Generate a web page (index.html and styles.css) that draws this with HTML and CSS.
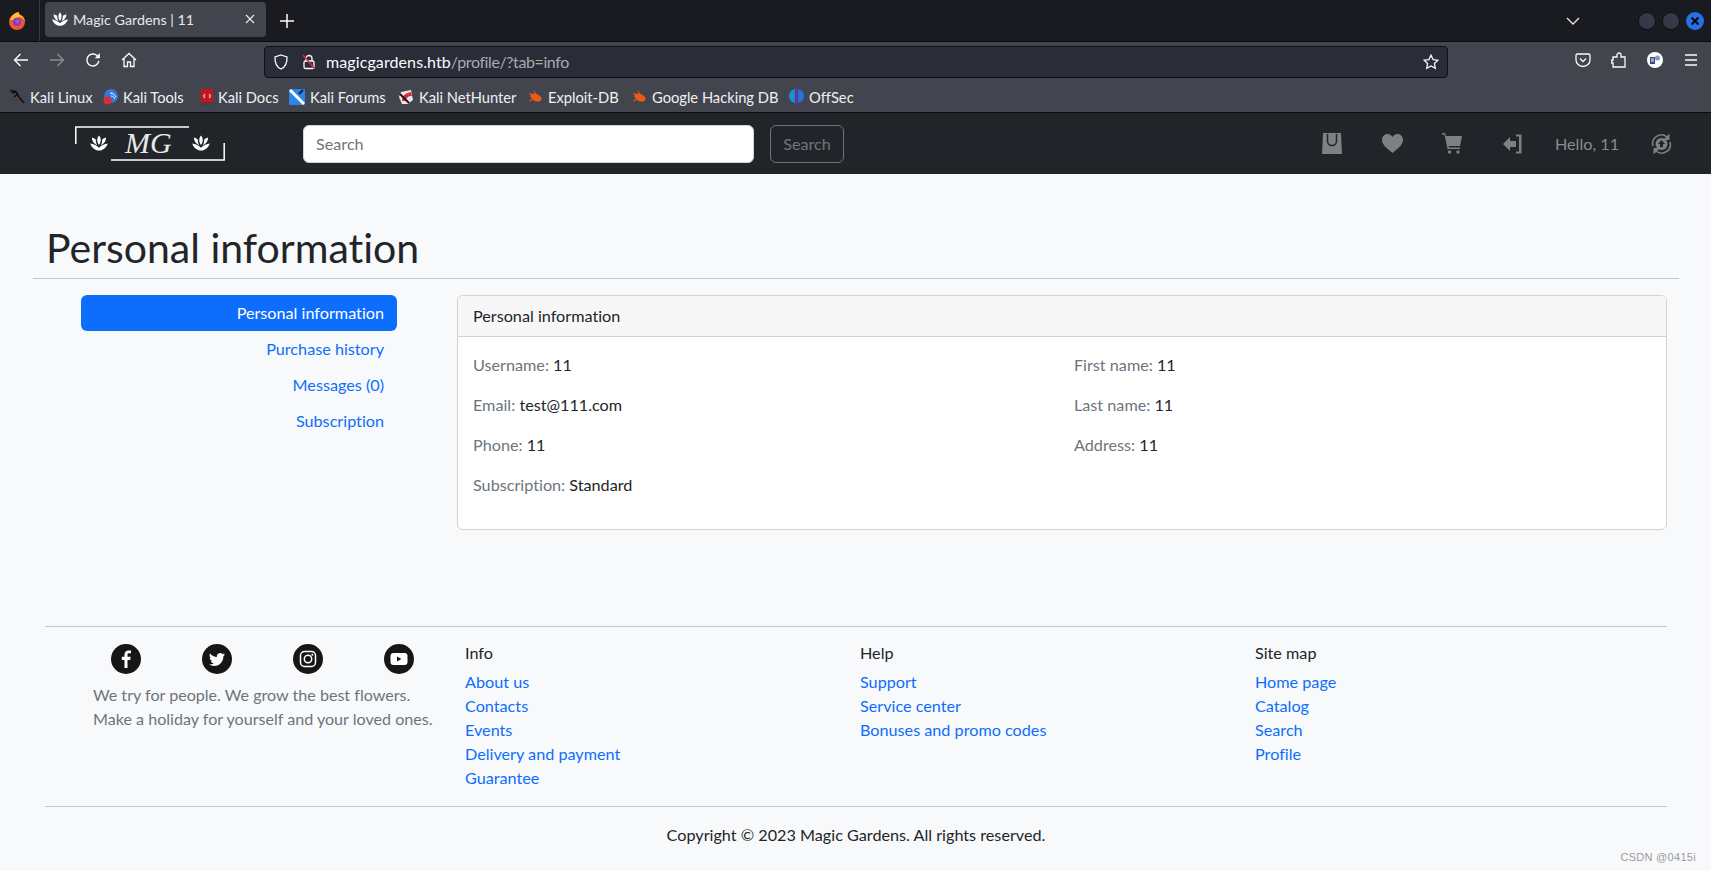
FILE: index.html
```html
<!DOCTYPE html>
<html lang="en">
<head>
<meta charset="utf-8">
<title>Magic Gardens | 11</title>
<link rel="stylesheet" href="styles.css">
</head>
<body>
<svg class="defs" width="0" height="0" aria-hidden="true">
  <symbol id="lotus" viewBox="0 0 24 24">
    <path fill="currentColor" d="M12 3C9.4 6 9 10.5 12 14.5 15 10.500 14.600 6 12 3zM3.500 5.500C3.500 9.500 5.500 13 9.800 14.600 8.500 12 8 9.500 8.200 7.700 6.800 6.600 5.200 5.900 3.500 5.500zM20.500 5.500C18.800 5.900 17.200 6.600 15.800 7.700 16 9.500 15.500 12 14.200 14.600 18.500 13 20.500 9.500 20.500 5.500zM1.500 12.500C3 17 7 21 12 21s9-4 10.500-8.500c-3.500.3-7.500 2-10.500 5.200-3-3.200-7-4.900-10.500-5.200z"/>
  </symbol>
</svg>

<header class="chrome">
  <div class="tabbar">
    <svg class="ff" width="20" height="20" viewBox="0 0 20 20"><circle cx="10" cy="11" r="8" fill="#f1562b"/><path d="M3 9C4 4 9 1 12 1c-.500 2 1 3 3 4 2 2 3 4 3 6-1-3-3-5-5-5-3 0-6 1-7 3z" fill="#ffbd3a"/><circle cx="10" cy="11" r="4" fill="#7b3fc4"/><circle cx="10.500" cy="10.500" r="2" fill="#c04bb0"/></svg>
    <span class="tabsep"></span>
    <div class="tab">
      <svg class="tabicon" width="18" height="18"><use href="#lotus"/></svg>
      <span class="tabtitle">Magic Gardens | 11</span>
      <svg class="tabclose" width="10" height="10" viewBox="0 0 10 10"><path d="M1 1l8 8M9 1l-8 8" stroke="#e8e8ea" stroke-width="1.200"/></svg>
    </div>
    <svg class="newtab" width="14" height="14" viewBox="0 0 14 14"><path d="M7 0v14M0 7h14" stroke="#fbfbfe" stroke-width="1.500"/></svg>
    <svg class="chev" width="14" height="8" viewBox="0 0 14 8"><path d="M1 1l6 6 6-6" fill="none" stroke="#e8e8ea" stroke-width="1.300"/></svg>
    <span class="winbtn"></span>
    <span class="winbtn"></span>
    <span class="winbtn close"><svg width="10" height="10" viewBox="0 0 10 10"><path d="M1.500 1.500l7 7M8.500 1.500l-7 7" stroke="#0b0b12" stroke-width="2.200"/></svg></span>
  </div>
  <div class="toolbar">
    <span class="tool"><svg width="16" height="16" viewBox="0 0 16 16"><path d="M15 8H1.500M7.500 2l-6 6 6 6" fill="none" stroke="#fbfbfe" stroke-width="1.400"/></svg></span>
    <span class="tool dim"><svg width="16" height="16" viewBox="0 0 16 16"><path d="M1 8h13.500M8.500 2l6 6-6 6" fill="none" stroke="#8a8c93" stroke-width="1.400"/></svg></span>
    <span class="tool"><svg width="16" height="16" viewBox="0 0 16 16"><path d="M13.800 8.800A6 6 0 1 1 12 3.600L14.300 5.500" fill="none" stroke="#fbfbfe" stroke-width="1.400"/><path d="M14.800 1v5.200H9.700z" fill="#fbfbfe"/></svg></span>
    <span class="tool"><svg width="16" height="16" viewBox="0 0 16 16"><path d="M1 8l7-6.500L15 8M3 6.500V14.500h3.500V10h3v4.500H13V6.500" fill="none" stroke="#fbfbfe" stroke-width="1.300"/></svg></span>
    <div class="urlbar">
      <svg class="shield" width="16" height="16" viewBox="0 0 16 16"><path d="M8 1l6 2c.3 6-1.500 10-6 12C3.500 13 1.700 9 2 3z" fill="none" stroke="#fbfbfe" stroke-width="1.300"/></svg>
      <svg class="lock" width="16" height="16" viewBox="0 0 16 16"><rect x="3" y="7" width="10" height="7.500" rx="1.500" fill="none" stroke="#fbfbfe" stroke-width="1.300"/><path d="M5 7V4.500a3 3 0 0 1 6 0V7" fill="none" stroke="#fbfbfe" stroke-width="1.300"/><path d="M2 1l12 14" stroke="#e22850" stroke-width="1.500"/></svg>
      <span class="url"><span class="host">magicgardens.htb</span>/profile/?tab=info</span>
      <svg class="star" width="16" height="16" viewBox="0 0 16 16"><path d="M8 1.200l2.100 4.400 4.800.6-3.500 3.300.9 4.800L8 12l-4.300 2.300.9-4.800L1.100 6.200l4.800-.6z" fill="none" stroke="#fbfbfe" stroke-width="1.300"/></svg>
    </div>
    <span class="tool pocket"><svg width="16" height="16" viewBox="0 0 16 16"><path d="M2.500 2h11A1.500 1.500 0 0 1 15 3.500V8a7 6.500 0 0 1-14 0V3.500A1.500 1.500 0 0 1 2.500 2z" fill="none" stroke="#fbfbfe" stroke-width="1.300"/><path d="M5 6.500l3 3 3-3" fill="none" stroke="#fbfbfe" stroke-width="1.300"/></svg></span>
    <span class="tool"><svg width="16" height="16" viewBox="0 0 16 16"><path d="M6 15H2v-4H.8V8H2V5h4V3a2 2 0 0 1 4 0v2h4v10z" fill="none" stroke="#fbfbfe" stroke-width="1.300"/></svg></span>
    <span class="tool"><svg width="16" height="16" viewBox="0 0 16 16"><circle cx="8" cy="8" r="8" fill="#fff"/><path d="M3 5h5v7H3z" fill="#34488f"/><circle cx="10.500" cy="6" r="2.500" fill="#8a97c9"/><path d="M4 7h3M4 9h3" stroke="#fff"/></svg></span>
    <span class="tool"><svg width="14" height="12" viewBox="0 0 14 12"><path d="M1 1h12M1 6h12M1 11h12" stroke="#fbfbfe" stroke-width="1.300"/></svg></span>
  </div>
  <nav class="bookmarks">
    <a class="bm bm-linux"><svg width="16" height="16" viewBox="0 0 16 16"><path d="M1 2c4-1 7 1 8 4s3 4 6 8M9 5l-4 3M3 4l4-1" fill="none" stroke="#0c0c10" stroke-width="1.500"/></svg>Kali Linux</a>
    <a class="bm bm-tools"><svg width="15" height="16" viewBox="0 0 15 16"><circle cx="8" cy="7" r="7" fill="#3079d8"/><circle cx="4.500" cy="11.500" r="4" fill="#d62f3a"/><path d="M7 4c3 0 5 2 6 4M8 7c2 0 3 1 4 3" stroke="#fff" fill="none"/></svg>Kali Tools</a>
    <a class="bm bm-docs"><svg width="13" height="16" viewBox="0 0 13 16"><rect x="1" width="12" height="16" rx="1" fill="#c4161c"/><rect x="1" y="13.500" width="12" height="2.500" fill="#3c3f47"/><path d="M5 5L3.500 7 5 9M9 5l1.500 2L9 9" stroke="#fff" fill="none"/></svg>Kali Docs</a>
    <a class="bm bm-forums"><svg width="16" height="16" viewBox="0 0 16 16"><rect width="16" height="16" rx="1" fill="#2a86e8"/><path d="M1 1l14 14" stroke="#fff" stroke-width="3"/><path d="M10 5l4-4" stroke="#10203a" stroke-width="2"/></svg>Kali Forums</a>
    <a class="bm bm-hunter"><svg width="16" height="16" viewBox="0 0 16 16"><path d="M3 3l10-2 2 10-5 4H4L1 8z" fill="#e8e8ea"/><path d="M4 12c0-5 3-8 9-9l1 4c-4 0-6 2-6 5z" fill="#d62f3a"/><path d="M2 5l9 9" stroke="#16161a" stroke-width="2"/></svg>Kali NetHunter</a>
    <a class="bm bm-exploit"><svg width="15" height="14" viewBox="0 0 15 14"><ellipse cx="8" cy="7.500" rx="6" ry="3.500" transform="rotate(25 8 7.500)" fill="#ec5b13"/><path d="M1 3l4 2M1 11l5-2M6 1l2 3" stroke="#ec5b13"/></svg>Exploit-DB</a>
    <a class="bm bm-ghdb"><svg width="15" height="14" viewBox="0 0 15 14"><ellipse cx="8" cy="7.500" rx="6" ry="3.500" transform="rotate(25 8 7.500)" fill="#ec5b13"/><path d="M1 3l4 2M1 11l5-2M6 1l2 3" stroke="#ec5b13"/></svg>Google Hacking DB</a>
    <a class="bm bm-offsec"><svg width="15" height="17" viewBox="0 0 15 17"><path d="M6 1C2 2 0 5 0 8s2 6 6 7z" fill="#1f8fd8"/><path d="M9 1c4 1 6 4 6 7s-2 6-6 7z" fill="#2b6fd8"/><path d="M7.500 0v17" stroke="#6a2fd8" stroke-width="1.300"/></svg>OffSec</a>
  </nav>
</header>

<div class="navbar">
  <svg class="logo" width="150" height="35" viewBox="0 0 150 35">
    <path d="M.8 18V1H114M36 34H149.200V17" fill="none" stroke="#fff" stroke-width="1.500"/>
    <use href="#lotus" x="14" y="7" width="20" height="20" class="white"/>
    <use href="#lotus" x="116" y="7" width="20" height="20" class="white"/>
    <text x="50" y="27" class="logotext">MG</text>
  </svg>
  <form class="search">
    <input class="search-input" type="text" placeholder="Search">
    <button class="search-btn" type="button">Search</button>
  </form>
  <div class="nav-right">
    <span class="slot"><svg width="20" height="22" viewBox="0 0 20 22"><path d="M1 0h18l1 21H0z" fill="#808080"/><path d="M5.500 1v7a4.500 4.500 0 0 0 9 0V1" fill="none" stroke="#212529" stroke-width="1.500"/></svg></span>
    <span class="slot"><svg width="21" height="19" viewBox="0 0 21 19"><path d="M10.500 19C4 13.500 0 10.500 0 5.700 0 2.500 2.500 0 5.500 0c2 0 3.900 1 5 3 1.100-2 3-3 5-3 3 0 5.500 2.500 5.500 5.700 0 4.800-4 7.800-10.500 13.300z" fill="#808080"/></svg></span>
    <span class="slot"><svg width="20" height="21" viewBox="0 0 20 21"><path d="M0 0h3l1 3h16l-2 10H6.500L7 14.500h11V16H5.500L2.500 1.500H0z" fill="#808080"/><path d="M5 5h14l-1.500 7H6.500z" fill="#808080"/><circle cx="7.500" cy="19" r="1.700" fill="#808080"/><circle cx="16" cy="19" r="1.700" fill="#808080"/></svg></span>
    <span class="slot"><svg width="19" height="20" viewBox="0 0 19 20"><path d="M0 10l7-7v4h6v6H7v4z" fill="#808080"/><path d="M13 .500h5.500v19H13v-2h3V2.500h-3z" fill="#808080"/></svg></span>
    <span class="hello">Hello, 11</span>
    <span class="slot sync"><svg width="21" height="22" viewBox="0 0 21 22"><circle cx="10.500" cy="11" r="6" fill="#808080"/><path d="M10.500 7l-3.700 4h2.200v3.300h3V11h2.200z" fill="#212529"/><path d="M2 13a8.700 8.700 0 0 1 14-9M19 9a8.700 8.700 0 0 1-14 9" fill="none" stroke="#808080" stroke-width="1.600"/><path d="M18.500 .500V7H12zM2.500 21.500V15H9z" fill="#808080"/></svg></span>
  </div>
</div>

<main class="page">
  <h1 class="title">Personal information</h1>
  <div class="layout">
    <ul class="side">
      <li><a class="side-link active">Personal information</a></li>
      <li><a class="side-link">Purchase history</a></li>
      <li><a class="side-link">Messages (0)</a></li>
      <li><a class="side-link">Subscription</a></li>
    </ul>
    <section class="card">
      <div class="card-head">Personal information</div>
      <div class="card-body">
        <p class="row"><span class="muted">Username:</span> 11</p>
        <p class="row"><span class="muted">First name:</span> 11</p>
        <p class="row"><span class="muted">Email:</span> test@111.com</p>
        <p class="row"><span class="muted">Last name:</span> 11</p>
        <p class="row"><span class="muted">Phone:</span> 11</p>
        <p class="row"><span class="muted">Address:</span> 11</p>
        <p class="row"><span class="muted">Subscription:</span> Standard</p>
      </div>
    </section>
  </div>
</main>

<footer class="footer">
  <div class="foot-row">
    <div class="brand">
      <div class="socials">
        <svg width="30" height="30" viewBox="0 0 30 30"><circle cx="15" cy="15" r="15" fill="#161616"/><path d="M16.500 24v-8h2.700l.4-3.200h-3.100v-2c0-.9.3-1.500 1.600-1.500H20V6.500c-.3 0-1.300-.1-2.400-.1-2.400 0-4.100 1.500-4.100 4.100v2.300h-2.700V16h2.700v8z" fill="#fff"/></svg>
        <svg width="30" height="30" viewBox="0 0 30 30"><circle cx="15" cy="15" r="15" fill="#161616"/><g transform="translate(7 7)"><path d="M5.026 15c6.038 0 9.341-5.003 9.341-9.334 0-.14 0-.282-.006-.422A6.685 6.685 0 0 0 16 3.542a6.658 6.658 0 0 1-1.889.518 3.301 3.301 0 0 0 1.447-1.817 6.533 6.533 0 0 1-2.087.793A3.286 3.286 0 0 0 7.875 6.030a9.325 9.325 0 0 1-6.767-3.429 3.289 3.289 0 0 0 1.018 4.382A3.323 3.323 0 0 1 .64 6.575v.045a3.288 3.288 0 0 0 2.632 3.218 3.203 3.203 0 0 1-.865.115 3.230 3.230 0 0 1-.614-.057 3.283 3.283 0 0 0 3.067 2.277A6.588 6.588 0 0 1 .78 13.580a6.320 6.320 0 0 1-.78-.045A9.344 9.344 0 0 0 5.026 15z" fill="#fff"/></g></svg>
        <svg width="30" height="30" viewBox="0 0 30 30"><circle cx="15" cy="15" r="15" fill="#161616"/><rect x="7.500" y="7.500" width="15" height="15" rx="4" fill="none" stroke="#fff" stroke-width="1.500"/><circle cx="15" cy="15" r="3.700" fill="none" stroke="#fff" stroke-width="1.500"/><circle cx="19.300" cy="10.700" r="1" fill="#fff"/></svg>
        <svg width="30" height="30" viewBox="0 0 30 30"><circle cx="15" cy="15" r="15" fill="#161616"/><rect x="6.500" y="9" width="17" height="12" rx="3" fill="#fff"/><path d="M13 12.500v5l4.500-2.500z" fill="#161616"/></svg>
      </div>
      <p class="tagline">We try for people. We grow the best flowers.<br>Make a holiday for yourself and your loved ones.</p>
    </div>
    <div class="foot-col">
      <div class="foot-title">Info</div>
      <a class="foot-link">About us</a>
      <a class="foot-link">Contacts</a>
      <a class="foot-link">Events</a>
      <a class="foot-link">Delivery and payment</a>
      <a class="foot-link">Guarantee</a>
    </div>
    <div class="foot-col">
      <div class="foot-title">Help</div>
      <a class="foot-link">Support</a>
      <a class="foot-link">Service center</a>
      <a class="foot-link">Bonuses and promo codes</a>
    </div>
    <div class="foot-col">
      <div class="foot-title">Site map</div>
      <a class="foot-link">Home page</a>
      <a class="foot-link">Catalog</a>
      <a class="foot-link">Search</a>
      <a class="foot-link">Profile</a>
    </div>
  </div>
  <p class="copy">Copyright © 2023 Magic Gardens. All rights reserved.</p>
</footer>
<div class="watermark">CSDN @0415i</div>
</body>
</html>
```
FILE: styles.css
```css
* { box-sizing: border-box; }
html, body { margin: 0; height: 871px; overflow: hidden; }
body {
  background: #f8f9fa;
  color: #212529;
  font: 16.2px/24px Lato, sans-serif;
  font-variant-ligatures: none;
  position: relative;
}
.defs { position: absolute; }
svg { display: block; flex: none; }

/* browser chrome */
.chrome { color: #fbfbfe; font-size: 14.7px; }
.tabbar { height: 42px; background: #1a1b20; display: flex; align-items: center; padding-left: 7px; border-bottom: 1px solid #0c0c0f; }
.tabsep { width: 1px; height: 41px; background: #3a3b40; margin: 0 5px 0 12px; }
.tab { flex: none; width: 221px; height: 35px; margin-top: -3px; background: #42454e; border-radius: 4px; display: flex; align-items: center; padding-left: 6px; }
.tabicon { color: #fff; }
.tabtitle { margin-left: 4px; padding-top: 2px; flex: 1; font-size: 14.3px; color: #e8e8ea; }
.tabclose { margin-right: 11px; }
.newtab { margin-left: 14px; }
.chev { margin-left: 1272px; }
.winbtn { flex: none; width: 18px; height: 18px; border-radius: 50%; background: #353a4a; border: 1px solid #0e0f14; display: flex; align-items: center; justify-content: center; }
.chev + .winbtn { margin-left: 58px; }
.winbtn + .winbtn { margin-left: 6px; }
.winbtn.close { background: #2870e8; border: 0; }
.toolbar { height: 36px; background: #42454e; display: flex; align-items: center; padding: 0 2px 0 3px; }
.tool { width: 36px; height: 36px; display: flex; align-items: center; justify-content: center; }
.urlbar { width: 1184px; height: 32px; margin: 4px 117px 0; background: #2a2c37; border: 1px solid #0e0f14; border-radius: 4px; display: flex; align-items: center; padding: 0 8px; }
.lock { margin-left: 12px; }
.url { margin-left: 9px; flex: 1; font-size: 16px; letter-spacing: -.4px; color: #a9aab0; }
.host { color: #fbfbfe; letter-spacing: .1px; }
.bookmarks { height: 35px; background: #42454e; border-bottom: 1px solid #0c0c0f; display: flex; align-items: center; padding: 3px 0 0 9px; }
.bm { flex: none; display: flex; align-items: center; gap: 5px; color: #f0f0f3; white-space: nowrap; }
.bm-linux { width: 94px; }
.bm-tools { width: 97px; }
.bm-docs { width: 89px; }
.bm-forums { width: 109px; }
.bm-hunter { width: 130px; }
.bm-exploit { width: 104px; }
.bm-ghdb { width: 157px; }

/* site navbar */
.navbar { height: 61px; background: #212529; display: flex; align-items: center; padding-left: 75px; padding-right: 20px; }
.logo { color: #fff; overflow: visible; }
.logotext { font: italic 30px "Liberation Serif", serif; fill: #e8e8e8; }
.search { display: flex; gap: 16px; margin-left: 78px; }
.search-input { width: 451px; height: 38px; border: 1px solid #ced4da; border-radius: 6px; background: #fff; padding: 0 12px; font: inherit; }
.search-input::placeholder { color: #6c757d; opacity: 1; }
.search-btn { width: 74px; height: 38px; background: transparent; border: 1px solid #6c757d; border-radius: 6px; color: #6c757d; font: inherit; padding: 0; }
.nav-right { margin-left: auto; display: flex; align-items: center; color: #808080; }
.slot { width: 60px; display: flex; justify-content: center; }
.hello { width: 90px; text-align: center; color: #8c8c8c; }
.slot.sync { width: 59px; }

/* page */
.page { padding: 50px 32px 0 33px; }
.title { margin: 0; padding: 0 0 6px 13px; border-bottom: 1px solid #c4c6c8; font-size: 41px; line-height: 48px; font-weight: 400; }
.layout { display: grid; grid-template-columns: 316px 1fr; column-gap: 60px; padding: 16px 12px 0 48px; }
.side { list-style: none; margin: 0; padding: 0; }
.side-link { display: block; height: 36px; line-height: 36px; text-align: right; padding-right: 13px; color: #0d6efd; border-radius: 6px; }
.side-link.active { background: #0d6efd; color: #fff; }
.card { background: #fff; border: 1px solid #d2d3d4; border-radius: 6px; height: 235px; }
.card-head { height: 41px; padding: 8px 15px 0; background: #f7f7f7; border-bottom: 1px solid #d2d3d4; border-radius: 5px 5px 0 0; }
.card-body { padding: 16px 15px; display: grid; grid-template-columns: 601px 1fr; }
.row { margin: 0 0 16px; }
.muted { color: #6c757d; }

/* footer */
.footer { margin: 96px 44px 0 45px; border-top: 1px solid #c4c6c8; }
.foot-row { display: grid; grid-template-columns: 420px 395px 395px 1fr; padding-top: 14px; padding-bottom: 16px; border-bottom: 1px solid #c4c6c8; }
.socials { display: flex; gap: 61px; padding: 3px 0 0 66px; }
.tagline { margin: 9px 0 0 48px; font-size: 16.1px; color: #6c757d; white-space: nowrap; }
.foot-title { margin-bottom: 5px; }
.foot-link { display: block; height: 24px; color: #0d6efd; }
.copy { margin: 16px 0 0; text-align: center; }
.watermark { position: absolute; right: 15px; bottom: 6px; font: 11px/16px "Liberation Sans", sans-serif; color: #9a9b9d; letter-spacing: .3px; }
```
